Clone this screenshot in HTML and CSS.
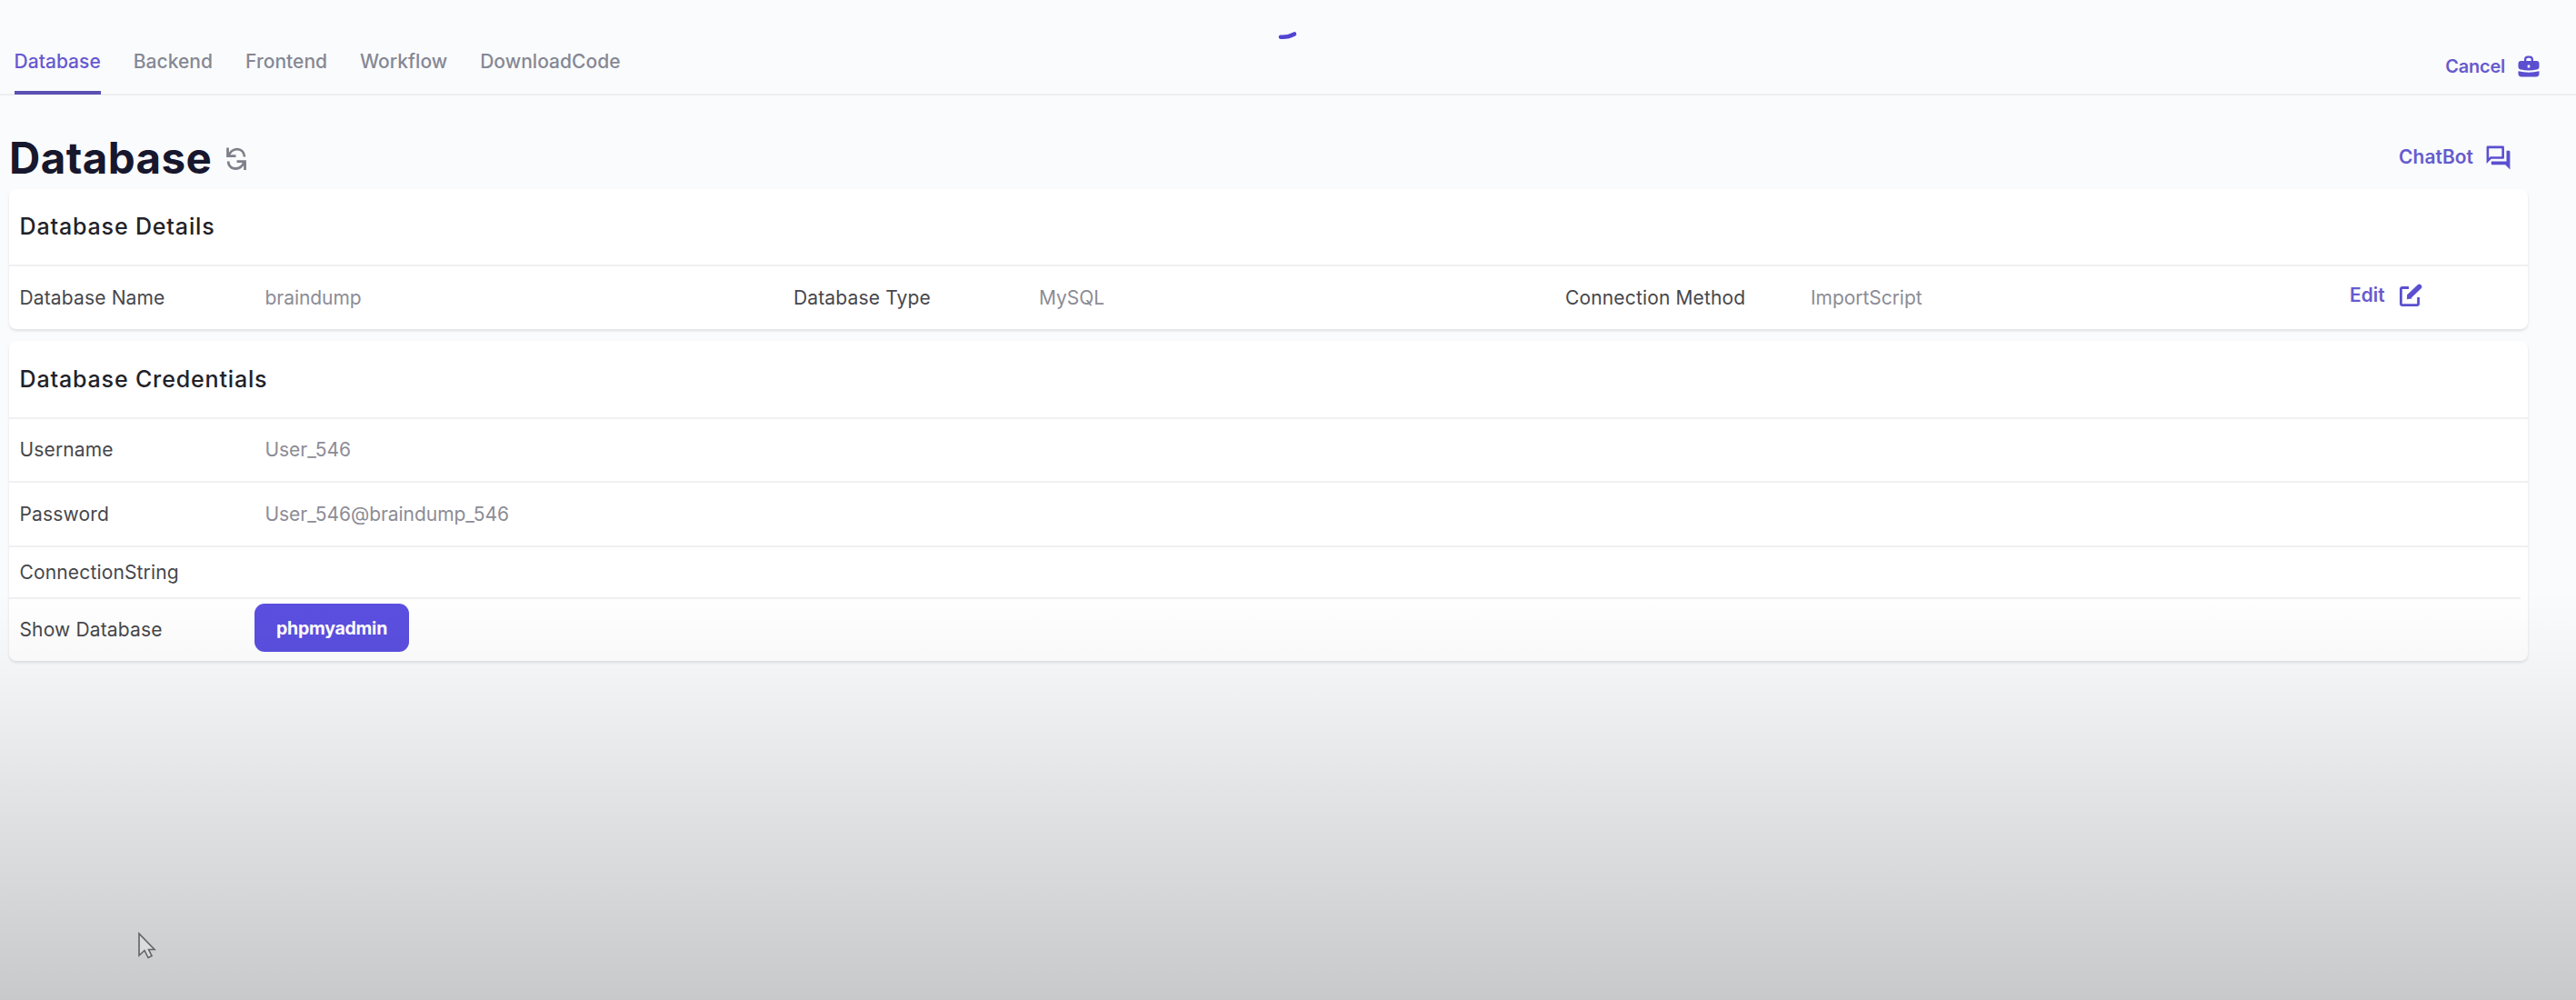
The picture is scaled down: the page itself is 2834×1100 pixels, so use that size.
FILE: index.html
```html
<!DOCTYPE html>
<html lang="en">
<head>
<meta charset="utf-8">
<title>Database</title>
<link rel="stylesheet" href="styles.css">
</head>
<body>
<header class="topbar">
  <nav class="tabs">
    <a class="tab active">Database</a>
    <a class="tab">Backend</a>
    <a class="tab">Frontend</a>
    <a class="tab">Workflow</a>
    <a class="tab">DownloadCode</a>
  </nav>
  <a class="action cancel">Cancel
    <svg width="24" height="24" viewBox="0 0 24 24" fill="currentColor"><path fill-rule="evenodd" d="M7 6V4.500C7 2 8.500 .5 11 .5h2c2.500 0 4 1.500 4 4V6h3.500C22.500 6 23.500 7 23.500 9v3.500c0 1.700-1 2.700-3 3.100-5.500 1.200-11.500 1.200-17 0-2-.4-3-1.400-3-3.100V9C.5 7 1.500 6 3.500 6zM9.300 6h5.400V4.800c0-1.300-.7-2-2-2h-1.400c-1.300 0-2 .7-2 2zM10.700 10.500v3h2.600v-3z"/><path d="M.5 17.300c7.500 1.800 15.500 1.800 23 0v2.700c0 2.300-1.200 3.500-3.500 3.500H4c-2.300 0-3.500-1.200-3.500-3.500z"/></svg>
  </a>
</header>
<svg class="spinner" width="24" height="10" viewBox="0 0 24 10" fill="none"><path d="M4 6.700Q12 7.300 19 3.500" stroke="#5244d3" stroke-width="4.600" stroke-linecap="round"/></svg>
<main class="page">
  <div class="title-row">
    <h1>Database</h1>
    <svg class="refresh" width="24" height="27" viewBox="0 0 24 27" fill="none" stroke="#80808b" stroke-width="2.800"><path d="M2.500 1.500v9.200h9M3.500 10C7 1 20 0 21 11.500M21.500 26v-9.300h-9M20.500 17.500C17 26.500 4 27.500 3 16.500"/></svg>
    <a class="action chat">ChatBot
      <svg width="31" height="31" viewBox="0 0 24 24" fill="currentColor"><path d="M15 4v7H5.170L4 12.170V4h11m1-2H3c-.55 0-1 .45-1 1v14l4-4h10c.55 0 1-.45 1-1V3c0-.55-.45-1-1-1m5 4h-2v9H6v2c0 .55.45 1 1 1h11l4 4V7c0-.55-.45-1-1-1"/></svg>
    </a>
  </div>
  <section class="card">
    <h2>Database Details</h2>
    <div class="row details">
      <span class="label">Database Name</span><span class="value">braindump</span>
      <span class="label">Database Type</span><span class="value">MySQL</span>
      <span class="label">Connection Method</span><span class="value">ImportScript</span>
      <a class="action edit">Edit
        <svg width="26" height="26" viewBox="0 0 26 26" fill="none" stroke="currentColor" stroke-width="2.800"><path d="M11 4.500H4Q2.400 4.500 2.400 6v16Q2.400 23.600 4 23.600h16q1.600 0 1.600-1.600v-7"/><path d="M12 13.500L22.500 3.500" stroke-width="5.600" stroke-linecap="round"/><path d="M8.800 17.300l1-6 5 5z" fill="currentColor" stroke="none"/></svg>
      </a>
    </div>
  </section>
  <section class="card">
    <h2>Database Credentials</h2>
    <div class="row"><span class="label">Username</span><span class="value">User_546</span></div>
    <div class="row"><span class="label">Password</span><span class="value">User_546@braindump_546</span></div>
    <div class="row short"><span class="label">ConnectionString</span></div>
    <div class="row last"><span class="label">Show Database</span><button class="primary">phpmyadmin</button></div>
  </section>
</main>
<div class="shade"></div>
<svg class="cursor" width="22" height="32" viewBox="0 0 22 32"><path d="M2 2v24l6-5.500 4 8 4-2-3.500-7H19z" fill="#dcdcdd" stroke="#636366" stroke-width="1.600"/></svg>
</body>
</html>
```
FILE: styles.css
```css
* { box-sizing: border-box; }
body {
  margin: 0;
  height: 1100px;
  overflow: hidden;
  background: #fafbfd;
  font: 400 21px/26px Inter, sans-serif;
  color: #47474c;
}
svg { flex: none; }
.topbar {
  height: 105px;
  border-bottom: 2px solid #eeeef1;
  display: flex;
  justify-content: space-between;
  padding: 30px 40px 0 15.500px;
}
.tabs { display: flex; gap: 36px; }
.tab {
  height: 74px;
  padding-top: 25px;
  font-weight: 500;
  letter-spacing: .03px;
  color: #858894;
}
.tab.active { color: #6659d1; border-bottom: 4px solid #5a50b4; }
.action {
  display: flex;
  align-items: center;
  font-weight: 600;
  color: #675bcd;
}
.action svg { color: #5b4fd0; }
.cancel { font-size: 20px; height: 26px; margin-top: 30px; gap: 14px; letter-spacing: -.25px; }
.spinner { position: absolute; left: 1405px; top: 34px; }
.page { padding: 36px 53px 0 10px; }
.title-row { display: flex; align-items: center; height: 67px; padding-bottom: 2px; }
h1 {
  margin: 0;
  font-size: 47.5px;
  line-height: 60px;
  font-weight: 700;
  letter-spacing: .4px;
  color: #17172e;
}
.refresh { margin: 1px 0 0 15px; }
.chat { margin: -1px 17px 0 auto; gap: 12px; }
.card {
  background: #fff;
  border-radius: 8px;
  margin-bottom: 13px;
  box-shadow: 0 2px 3px rgba(40, 40, 60, .12);
}
h2 {
  margin: 0;
  padding: 0 11.500px;
  height: 83px;
  line-height: 82px;
  font-size: 25px;
  font-weight: 500;
  letter-spacing: .85px;
  color: #222228;
}
.card + .card h2 { height: 84px; line-height: 84px; }
.row {
  display: flex;
  align-items: center;
  height: 70.500px;
  padding: 1px 11.500px 0;
  border-top: 2px solid #f0f0f2;
}
.label { width: 270px; letter-spacing: .15px; }
.value { color: #8c8c95; letter-spacing: -.05px; }
.details { display: grid; grid-template-columns: 270px 581.500px 270px 579px 270px 593px auto; justify-content: start; }
.details .label { width: auto; }
.edit { gap: 15px; margin-top: -5px; }
.short { height: 57px; }
.last { height: 70px; margin-right: 8px; }
.last .label { width: 258.500px; }
.primary {
  width: 170px;
  height: 53px;
  margin-top: -5px;
  border: 0;
  border-radius: 11px;
  background: #5b4fe0;
  color: #fff;
  font: 700 19.5px/26px Inter, sans-serif;
  letter-spacing: -.25px;
}
.shade {
  position: absolute;
  inset: 650px 0 0;
  background: linear-gradient(rgba(0, 0, 0, 0), rgba(0, 0, 0, .028) 18%, rgba(0, 0, 0, .2));
  pointer-events: none;
}
.cursor { position: absolute; left: 151px; top: 1025px; }
```
